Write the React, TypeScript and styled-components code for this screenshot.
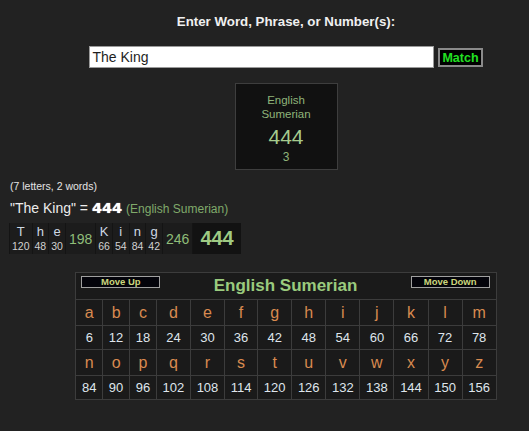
import React from "react";
import styled, { createGlobalStyle } from "styled-components";

const GlobalStyle = createGlobalStyle`
  html, body {
    margin: 0;
    padding: 0;
    background: #222222;
    font-family: "Liberation Sans", Arial, sans-serif;
    color: #e8e8e8;
  }
  * { box-sizing: border-box; }
`;

const Page = styled.div`
  width: 529px;
  min-height: 431px;
  background: #222222;
  overflow: hidden;
`;

const Centered = styled.div`
  display: flex;
  flex-direction: column;
  align-items: center;
  padding-left: 43px;
`;

const Title = styled.div`
  margin-top: 14px;
  font-size: 13.3px;
  line-height: 16px;
  font-weight: bold;
  color: #f0f0f0;
`;

const SearchRow = styled.form`
  display: flex;
  align-items: center;
  gap: 4px;
  margin: 16px 0 0;
`;

const TextInput = styled.input`
  width: 345px;
  height: 22px;
  padding: 0 2px;
  border: 1px solid #9a9a9a;
  background: #ffffff;
  color: #1e1e1e;
  font-family: "Liberation Sans", Arial, sans-serif;
  font-size: 14px;
  outline: none;
`;

const MatchButton = styled.button`
  height: 19px;
  padding: 0 2px;
  margin-top: 1px;
  border: 2px solid #8a8a8a;
  background: #000000;
  color: #22e022;
  font-family: "Liberation Sans", Arial, sans-serif;
  font-weight: bold;
  font-size: 12.5px;
  line-height: 14px;
  cursor: pointer;
`;

const CipherBox = styled.div`
  margin-top: 15px;
  width: 103px;
  height: 87px;
  border: 1px solid #3e3e3e;
  background: #111111;
  padding-top: 10px;
  text-align: center;
`;

const CipherLabel = styled.div`
  width: 70px;
  margin: 0 auto;
  font-size: 11.5px;
  line-height: 13.5px;
  color: #8fb47a;
`;

const CipherValue = styled.div`
  margin-top: 4px;
  font-size: 21px;
  line-height: 24px;
  color: #a6cc8e;
`;

const CipherCount = styled.div`
  margin-top: 1px;
  font-size: 12px;
  line-height: 14px;
  color: #8fb47a;
`;

const Summary = styled.div`
  padding-left: 10px;
  margin-top: 10px;
`;

const Counts = styled.div`
  font-size: 10.5px;
  line-height: 13px;
  color: #e4e4e4;
`;

const Equation = styled.div`
  margin-top: 6px;
  font-size: 14px;
  line-height: 18px;
  color: #ececec;
  white-space: nowrap;
`;

const EquationValue = styled.span`
  font-family: "DejaVu Sans", sans-serif;
  font-weight: bold;
  font-size: 14.5px;
  color: #ffffff;
  text-shadow: 0 0 1px #ffffff;
`;

const EquationCipher = styled.span`
  font-size: 12px;
  color: #80aa6b;
`;

const Breakdown = styled.div`
  display: inline-flex;
  margin-top: 5px;
  margin-left: -1px;
  background: #141414;
  height: 31px;
`;

const LetterCell = styled.div`
  display: flex;
  flex-direction: column;
  align-items: center;
  padding: 1px 2px;
  background: #1c1c1c;
  border-left: 1px solid #141414;
`;

const LetterChar = styled.span`
  font-size: 13px;
  line-height: 15px;
  color: #cdd8e4;
`;

const LetterNum = styled.span`
  font-size: 10.5px;
  line-height: 14px;
  color: #d2d2d2;
`;

const SumCell = styled.div<{ $total?: boolean }>`
  display: flex;
  align-items: center;
  padding: ${(p) => (p.$total ? "0 7px" : "0 3px")};
  background: ${(p) => (p.$total ? "#121212" : "#1c1c1c")};
  border-left: 1px solid #141414;
  font-size: ${(p) => (p.$total ? "20px" : "14px")};
  font-weight: ${(p) => (p.$total ? "bold" : "normal")};
  color: ${(p) => (p.$total ? "#9fcb84" : "#8fbd79")};
`;

const ChartWrap = styled.div`
  display: flex;
  justify-content: center;
  padding-left: 43px;
  margin-top: 18px;
`;

const Chart = styled.table`
  border-collapse: collapse;
  background: #1a1a1a;
  border: 1px solid #3c3c3c;
`;

const HeaderCell = styled.td`
  padding: 3px 6px 3px 5px;
  border: 1px solid #3c3c3c;
`;

const HeaderBar = styled.div`
  display: flex;
  justify-content: space-between;
  align-items: flex-start;
`;

const MoveButton = styled.button`
  width: 79px;
  height: 12px;
  margin-top: 0;
  padding: 0;
  border: 1px solid #a0a0a0;
  background: #03030a;
  color: #ccd67c;
  font-family: "Liberation Sans", Arial, sans-serif;
  font-weight: bold;
  font-size: 9.5px;
  line-height: 10px;
  cursor: pointer;
`;

const ChartTitle = styled.div`
  font-size: 17px;
  line-height: 20px;
  font-weight: bold;
  color: #9acb7e;
`;

const LetterTd = styled.td`
  padding: 3px 5.7px;
  border: 1px solid #3c3c3c;
  text-align: center;
  font-size: 16px;
  line-height: 19px;
  color: #d88a50;
`;

const ValueTd = styled.td`
  padding: 4px 5.7px;
  border: 1px solid #3c3c3c;
  text-align: center;
  font-size: 13px;
  line-height: 15px;
  color: #dfe5ec;
`;

const words = [
  { letters: [["T", 120], ["h", 48], ["e", 30]] as [string, number][], sum: 198 },
  { letters: [["K", 66], ["i", 54], ["n", 84], ["g", 42]] as [string, number][], sum: 246 },
];

const alphabet = "abcdefghijklmnopqrstuvwxyz".split("");
const rows = [alphabet.slice(0, 13), alphabet.slice(13)];
const valueOf = (ch: string) => (ch.charCodeAt(0) - 96) * 6;

export default function App() {
  return (
    <Page>
      <GlobalStyle />
      <Centered>
        <Title>Enter Word, Phrase, or Number(s):</Title>
        <SearchRow onSubmit={(e) => e.preventDefault()}>
          <TextInput defaultValue="The King" />
          <MatchButton type="submit">Match</MatchButton>
        </SearchRow>
        <CipherBox>
          <CipherLabel>English Sumerian</CipherLabel>
          <CipherValue>444</CipherValue>
          <CipherCount>3</CipherCount>
        </CipherBox>
      </Centered>

      <Summary>
        <Counts>(7 letters, 2 words)</Counts>
        <Equation>
          "The King" = <EquationValue>444</EquationValue>{" "}
          <EquationCipher>(English Sumerian)</EquationCipher>
        </Equation>
        <Breakdown>
          {words.map((w, wi) => (
            <React.Fragment key={wi}>
              {w.letters.map(([ch, v], li) => (
                <LetterCell key={li}>
                  <LetterChar>{ch}</LetterChar>
                  <LetterNum>{v}</LetterNum>
                </LetterCell>
              ))}
              <SumCell>{w.sum}</SumCell>
            </React.Fragment>
          ))}
          <SumCell $total>444</SumCell>
        </Breakdown>
      </Summary>

      <ChartWrap>
        <Chart>
          <tbody>
            <tr>
              <HeaderCell colSpan={13}>
                <HeaderBar>
                  <MoveButton type="button">Move Up</MoveButton>
                  <ChartTitle>English Sumerian</ChartTitle>
                  <MoveButton type="button">Move Down</MoveButton>
                </HeaderBar>
              </HeaderCell>
            </tr>
            {rows.map((row, ri) => (
              <React.Fragment key={ri}>
                <tr>
                  {row.map((ch) => (
                    <LetterTd key={ch}>{ch}</LetterTd>
                  ))}
                </tr>
                <tr>
                  {row.map((ch) => (
                    <ValueTd key={ch}>{valueOf(ch)}</ValueTd>
                  ))}
                </tr>
              </React.Fragment>
            ))}
          </tbody>
        </Chart>
      </ChartWrap>
    </Page>
  );
}
